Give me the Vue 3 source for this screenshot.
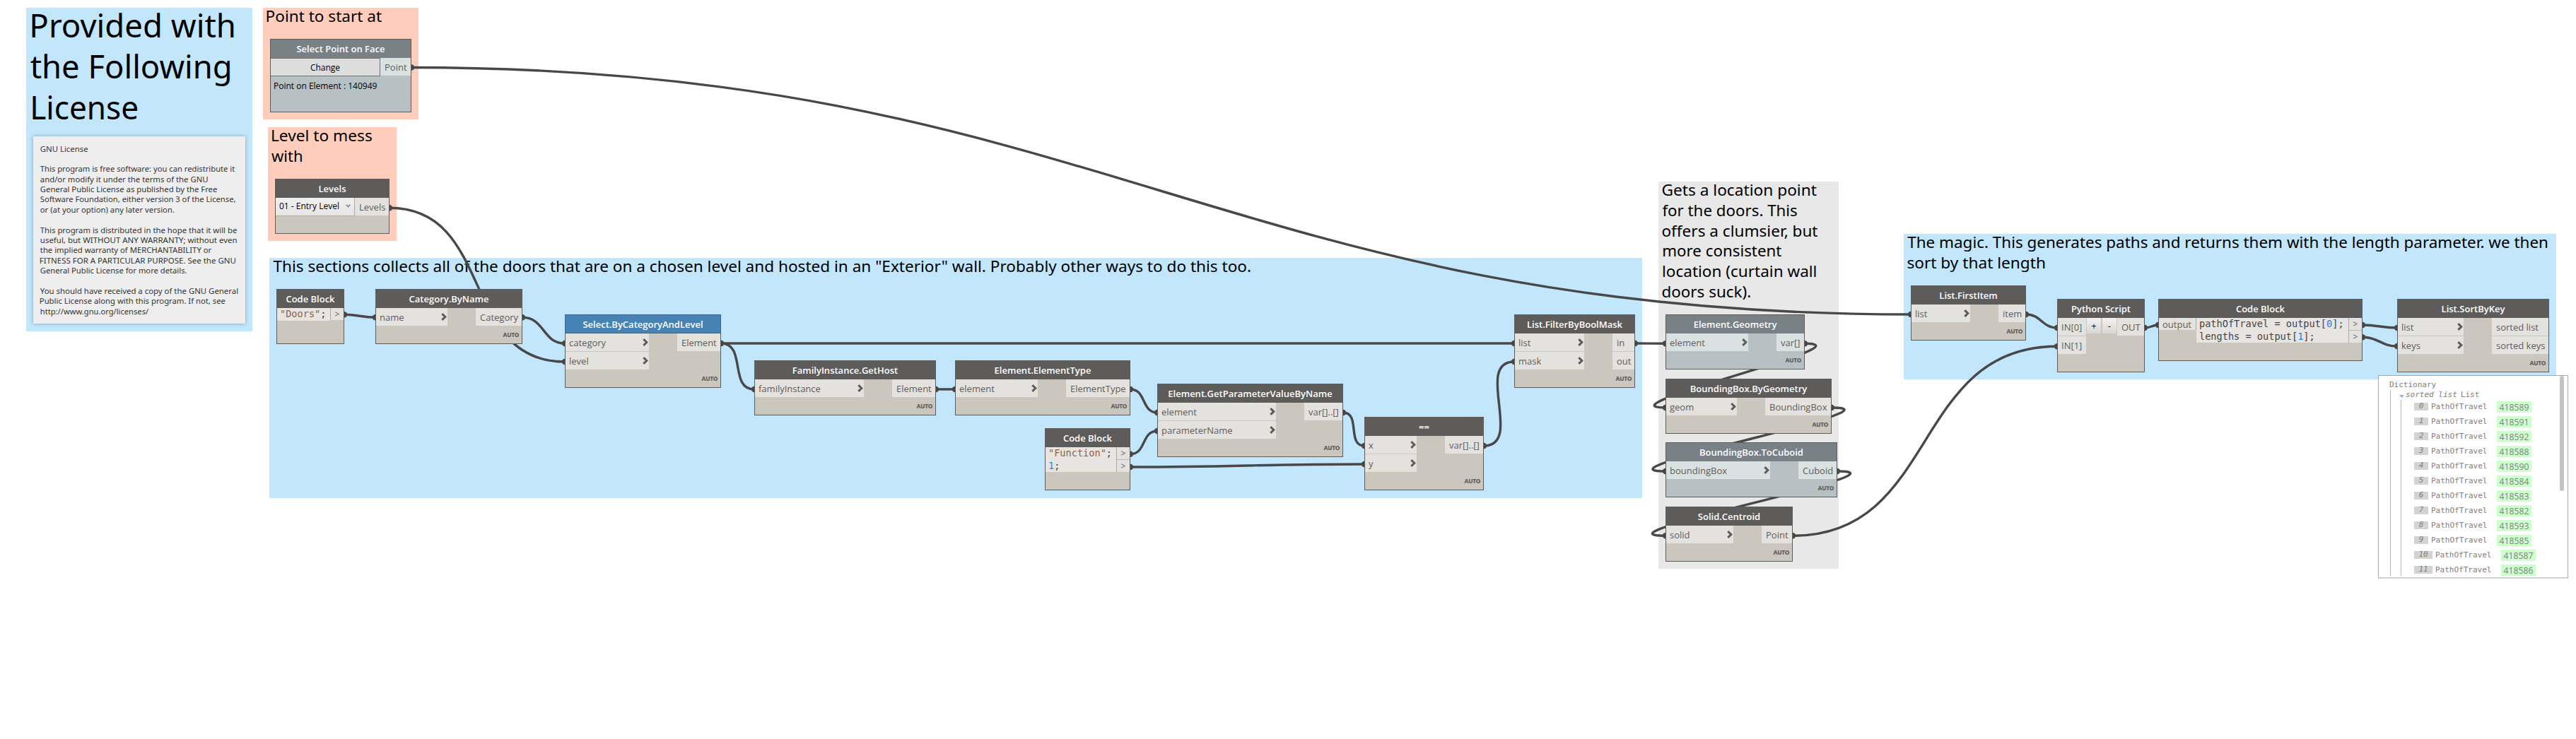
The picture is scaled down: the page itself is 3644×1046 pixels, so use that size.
<script setup>
// Stretches a line of text so that its ink starts at x and is w wide.
const vFit = {
  mounted(el, { value }) {
    const [x, w] = value
    const cs = getComputedStyle(el)
    const ctx = document.createElement('canvas').getContext('2d')
    ctx.font = `${cs.fontStyle} ${cs.fontWeight} ${cs.fontSize} ${cs.fontFamily}`
    const m = ctx.measureText(el.textContent.trim())
    const s = w / (m.actualBoundingBoxLeft + m.actualBoundingBoxRight)
    el.style.transform = `translateX(${x + m.actualBoundingBoxLeft * s}px) scaleX(${s})`
  },
}

const groups = [
  { x: 37, y: 11, w: 320, h: 458, color: '#c2e6fc', big: true, lines: [['Provided with', 8.3, 285.3], ['the Following', 5.7, 282.7], ['License', 9, 148.3]] },
  { x: 372, y: 11, w: 220, h: 158, color: '#ffcdbb', lines: [['Point to start at', 5.6, 162.4]] },
  { x: 379, y: 180, w: 182, h: 161, color: '#ffcdbb', lines: [['Level to mess', 6, 141], ['with', 5, 43.6]] },
  { x: 381, y: 365, w: 1942, h: 340, color: '#c2e6fc', lines: [['This sections collects all of the doors that are on a chosen level and hosted in an "Exterior" wall. Probably other ways to do this too.', 5.4, 1382.6]] },
  { x: 2346, y: 257, w: 255, h: 548, color: '#e8e8e8', lines: [['Gets a location point', 5.4, 218.4], ['for the doors. This', 5.4, 190.6], ['offers a clumsier, but', 5.4, 220], ['more consistent', 6.2, 168], ['location (curtain wall', 6, 216.6], ['doors suck).', 5.4, 124.8]] },
  { x: 2693, y: 331, w: 923, h: 206, color: '#c2e6fc', lines: [['The magic. This generates paths and returns them with the length parameter. we then', 5.2, 905.8], ['sort by that length', 5.4, 194.6]] },
]

const license = [
  ['GNU License', 67.3], ['', 0],
  ['This program is free software: you can redistribute it', 275.3],
  ['and/or modify it under the terms of the GNU', 237.3],
  ['General Public License as published by the Free', 250],
  ['Software Foundation, either version 3 of the License,', 276.6],
  ['or (at your option) any later version.', 190], ['', 0],
  ['This program is distributed in the hope that it will be', 278],
  ['useful, but WITHOUT ANY WARRANTY; without even', 278.6],
  ['the implied warranty of MERCHANTABILITY or', 242.6],
  ['FITNESS FOR A PARTICULAR PURPOSE. See the GNU', 276.6],
  ['General Public License for more details.', 207.6], ['', 0],
  ['You should have received a copy of the GNU General', 279.3],
  ['Public License along with this program. If not, see', 261.6],
  ['http://www.gnu.org/licenses/', 154],
]

// iw / ow: widths of the input and output port columns
const nodes = [
  { t: 'Select Point on Face', x: 382, y: 55, w: 200, h: 104, kind: 'select', tone: 'geo', out: ['Point'], ow: 43 },
  { t: 'Levels', x: 389, y: 253, w: 162, h: 78, kind: 'drop', out: ['Levels'], ow: 48 },
  { t: 'Code Block', x: 391, y: 409, w: 96, h: 78, kind: 'code', code: [[['s', '"Doors"'], ['', ';']]], outs: 1 },
  { t: 'Category.ByName', x: 531, y: 409, w: 208, h: 78, in: ['name'], iw: 101, out: ['Category'], ow: 65 },
  { t: 'Select.ByCategoryAndLevel', x: 799, y: 445, w: 221, h: 104, tone: 'picked', in: ['category', 'level'], iw: 118, out: ['Element'], ow: 61 },
  { t: 'FamilyInstance.GetHost', x: 1067, y: 510, w: 257, h: 78, in: ['familyInstance'], iw: 154, out: ['Element'], ow: 61 },
  { t: 'Element.ElementType', x: 1351, y: 510, w: 248, h: 78, in: ['element'], iw: 116, out: ['ElementType'], ow: 90 },
  { t: 'Code Block', x: 1478, y: 606, w: 121, h: 88, kind: 'code', code: [[['s', '"Function"'], ['', ';']], [['n', '1'], ['', ';']]], outs: 2 },
  { t: 'Element.GetParameterValueByName', x: 1637, y: 543, w: 263, h: 104, in: ['element', 'parameterName'], iw: 167, out: ['var[]..[]'], ow: 54 },
  { t: '==', x: 1930, y: 590, w: 169, h: 104, in: ['x', 'y'], iw: 73, out: ['var[]..[]'], ow: 54 },
  { t: 'List.FilterByBoolMask', x: 2142, y: 445, w: 171, h: 104, in: ['list', 'mask'], iw: 98, out: ['in', 'out'], ow: 31 },
  { t: 'Element.Geometry', x: 2356, y: 445, w: 197, h: 78, tone: 'geo', in: ['element'], iw: 116, out: ['var[]'], ow: 39 },
  { t: 'BoundingBox.ByGeometry', x: 2356, y: 536, w: 235, h: 78, in: ['geom'], iw: 100, out: ['BoundingBox'], ow: 93 },
  { t: 'BoundingBox.ToCuboid', x: 2356, y: 626, w: 243, h: 78, tone: 'geo', in: ['boundingBox'], iw: 147, out: ['Cuboid'], ow: 54 },
  { t: 'Solid.Centroid', x: 2356, y: 717, w: 180, h: 78, in: ['solid'], iw: 95, out: ['Point'], ow: 43 },
  { t: 'List.FirstItem', x: 2703, y: 404, w: 163, h: 78, in: ['list'], iw: 83, out: ['item'], ow: 38 },
  { t: 'Python Script', x: 2910, y: 423, w: 124, h: 104, kind: 'python', in: ['IN[0]', 'IN[1]'], iw: 40, out: ['OUT'], ow: 38 },
  { t: 'Code Block', x: 3053, y: 423, w: 289, h: 88, kind: 'code', input: 'output', code: [[['', 'pathOfTravel = output['], ['n', '0'], ['', '];']], [['', 'lengths = output['], ['n', '1'], ['', '];']]], outs: 2 },
  { t: 'List.SortByKey', x: 3391, y: 423, w: 215, h: 104, in: ['list', 'keys'], iw: 93, out: ['sorted list', 'sorted keys'], ow: 80 },
]

const wires = [
  [582, 95.5, 2703, 445],
  [551, 294.3, 799, 512],
  [487, 445.3, 531, 449.3],
  [739, 449.3, 799, 486],
  [1020, 486, 2142, 486],
  [1020, 486, 1067, 551],
  [1324, 551, 1351, 551],
  [1599, 551, 1637, 584],
  [1599, 642.8, 1637, 610],
  [1599, 661, 1930, 657],
  [1900, 584, 1930, 631],
  [2099, 631, 2142, 512],
  [2313, 486, 2356, 486.3],
  [2553, 486.3, 2356, 577],
  [2591, 577, 2356, 667],
  [2599, 667, 2356, 758.3],
  [2536, 758.3, 2910, 490.3],
  [2866, 445, 2910, 464],
  [3034, 464, 3053, 460],
  [3342, 460, 3391, 464],
  [3342, 477.3, 3391, 490],
]
const curve = ([x1, y1, x2, y2]) => {
  const o = 0.45 * Math.hypot(x2 - x1, y2 - y1)
  return `M${x1} ${y1}C${x1 + o} ${y1} ${x2 - o} ${y2} ${x2} ${y2}`
}

const results = ['418589', '418591', '418592', '418588', '418590', '418584', '418583', '418582', '418593', '418585', '418587', '418586']
const box = (o) => ({ left: o.x + 'px', top: o.y + 'px', width: o.w + 'px', height: o.h + 'px', background: o.color })
</script>

<template>
  <main class="canvas">
    <section v-for="(g, i) in groups" :key="'g' + i" class="group" :class="{ big: g.big }" :style="box(g)">
      <div class="caption">
        <div v-for="l in g.lines" :key="l[0]" class="line"><span v-fit="[l[1], l[2]]">{{ l[0] }}</span></div>
      </div>
    </section>

    <section class="note">
      <div v-for="(l, i) in license" :key="i" class="note-line"><span v-if="l[0]" v-fit="[9.8, l[1]]">{{ l[0] }}</span></div>
    </section>

    <svg class="wires" width="3644" height="1046" viewBox="0 0 3644 1046">
      <g v-for="(w, i) in wires" :key="i">
        <path :d="curve(w)" />
        <circle :cx="w[0]" :cy="w[1]" r="4.2" />
        <circle :cx="w[2]" :cy="w[3]" r="4.2" />
      </g>
    </svg>

    <article v-for="(n, i) in nodes" :key="'n' + i" class="node" :class="[n.tone, n.kind]" :style="box(n)">
      <header>{{ n.t }}</header>
      <div class="body">
        <template v-if="n.kind === 'code'">
          <div v-if="n.input" class="code-in">{{ n.input }}</div>
          <div class="code-text">
            <div v-for="(row, r) in n.code" :key="r"><span v-for="(p, k) in row" :key="k" :class="p[0]">{{ p[1] }}</span></div>
          </div>
          <div class="code-outs"><div v-for="k in n.outs" :key="k">&gt;</div></div>
        </template>
        <template v-else>
          <button v-if="n.kind === 'select'" class="change">Change</button>
          <div v-if="n.kind === 'drop'" class="combo">
            01 - Entry Level
            <svg width="7" height="5" viewBox="0 0 7 5"><path d="M.7 .7L3.5 3.7L6.3 .7" /></svg>
          </div>
          <div v-if="n.in" class="ports" :style="{ width: n.iw + 'px' }">
            <div v-for="p in n.in" :key="p" class="port">
              <span>{{ p }}</span>
              <svg v-if="n.kind !== 'python'" width="8" height="11" viewBox="0 0 8 11"><path d="M1.3 1.2L5.8 5.5L1.3 9.8" /></svg>
            </div>
          </div>
          <div v-if="n.kind === 'python'" class="steps"><button>+</button><button>-</button></div>
          <div class="ports out" :style="{ width: n.ow + 'px' }">
            <div v-for="p in n.out" :key="p" class="port"><span>{{ p }}</span></div>
          </div>
        </template>
      </div>
      <p v-if="n.kind === 'select'" class="picked-point">Point on Element : 140949</p>
      <footer v-if="!n.kind">AUTO</footer>
    </article>

    <aside class="preview">
      <div class="root">Dictionary</div>
      <div class="tree">
        <div class="branch"><i class="tri"></i><em>sorted list</em><span>List</span></div>
        <div class="items">
          <div v-for="(r, i) in results" :key="r" class="item">
            <em :class="{ wide: i > 9 }">{{ i }}</em><span>PathOfTravel</span><b>{{ r }}</b>
          </div>
        </div>
      </div>
      <div class="thumb"></div>
    </aside>
  </main>
</template>

<style>
body { margin: 0; background: #fff; }
</style>

<style scoped>
* { box-sizing: border-box; }
.canvas { position: relative; width: 3644px; height: 1046px; overflow: hidden; background: #fff; font-family: "Open Sans", sans-serif; }
.group { position: absolute; color: #000; font: 22.5px/28.75px "Noto Sans", sans-serif; white-space: nowrap; }
.caption { margin-top: -2px; }
.big { font-size: 46px; line-height: 57.8px; }
.big .caption { margin-top: -4px; }
.line span, .note-line span { display: inline-block; transform-origin: 0 50%; }
.line { height: 28.75px; }
.big .line { height: 57.8px; }
.note { position: absolute; left: 47px; top: 193px; width: 300px; height: 265px; background: #eee; box-shadow: 0 0 5px rgba(0, 0, 0, .3); padding-top: 10.5px; color: #333; font: 11.6px/14.375px "Noto Sans", sans-serif; white-space: nowrap; }
.note-line { height: 14.375px; }
.wires { position: absolute; left: 0; top: 0; }
.wires path { fill: none; stroke: #484848; stroke-width: 3.4; }
.wires circle { fill: #484848; }

.node { position: absolute; display: flex; flex-direction: column; border: 1px solid #5e5c5a; background: #cbc6be; color: #5e5c5a; font-size: 13px; white-space: nowrap; --port: #e4e2df; }
.node header { height: 26px; flex: none; line-height: 26px; text-align: center; background: #5e5c5a; color: #fff; font-weight: 600; }
.node.geo { background: #b7c0c3; --port: #dae1e1; }
.node.geo header { background: #778186; }
.node.picked header { background: #4682b4; border-bottom: 1px solid #5e5c5a; }
.body { display: flex; justify-content: space-between; align-items: flex-start; }
.ports { display: flex; flex-direction: column; gap: 1px; }
.port { display: flex; align-items: center; justify-content: space-between; height: 25px; padding: 1px 1px 0 5px; background: var(--port); }
.out .port { padding-left: 6px; }
.port svg { margin-top: -2px; }
.port svg path { fill: none; stroke: #5e5c5a; stroke-width: 3; }
footer { margin-top: auto; height: 25px; line-height: 24px; padding: 1px 4px 0 0; text-align: right; font-family: "Noto Sans", sans-serif; font-size: 8.4px; font-weight: 800; letter-spacing: -.3px; }

button { font: 13px "Open Sans", sans-serif; color: #000; padding: 0; border-radius: 0; }
.change { width: 155px; height: 26px; border: 1px solid #707070; border-left: 0; background: #ddd; font-size: 12px; padding-top: 1px; }
.picked-point { margin: 0; padding: 5px 0 0 4px; font-size: 12px; line-height: 17px; color: #000; }
.combo { display: flex; align-items: center; justify-content: space-between; width: 112px; height: 26px; padding: 0 5px 2px 5px; border: 1px solid #acacac; border-left: 0; border-top: 0; background: linear-gradient(#f0f0f0, #e5e5e5); color: #000; font-size: 12px; }
.combo svg path { fill: none; stroke: #777; stroke-width: 1.3; }
.steps { display: flex; gap: 2px; }
.steps button { width: 20px; height: 22px; border: 0; background: linear-gradient(#f2f2f2, #d9d6d2); font-size: 12px; }

.code-text { flex: 1; padding: 0 0 0 4px; background: #e7e4e2; color: #444; font: 13.6px/17.5px "DejaVu Sans Mono", monospace; }
.code-text div { height: 17.5px; white-space: pre; }
.code-text .s { color: #8f6443; }
.code-text .n { color: #2585e5; }
.code-outs { display: flex; flex-direction: column; gap: 1px; width: 19px; border-left: 1px solid #aaa; background: #bdbab6; }
.code-outs div { height: 17px; line-height: 17px; text-align: center; background: #e4e2df; font-size: 12px; }
.code-in { width: 53px; height: 17px; line-height: 18px; padding-left: 5px; background: #e4e2df; border-right: 1px solid #aaa; }

.preview { position: absolute; left: 3364px; top: 531px; width: 269px; height: 288px; border: 1px solid #a9a9a9; border-bottom: 2px solid #cfcfcf; background: #fff; color: #808080; font: 11px/14px "DejaVu Sans Mono", monospace; white-space: nowrap; overflow: hidden; }
.root { padding: 6px 0 0 15px; height: 20px; }
.tree { margin-left: 16px; border-left: 1px solid #b4b4b4; height: 263px; }
.branch { display: flex; align-items: center; padding-left: 12px; height: 14px; }
.tri { width: 7px; height: 4px; margin: 4px 2px 0 0; background: #86b5dc; clip-path: polygon(0 0, 100% 0, 50% 100%); }
.branch em { margin-right: 5px; }
.items { margin-left: 14px; border-left: 1px solid #b4b4b4; height: 249px; padding-top: 2px; }
.item { display: flex; align-items: flex-start; height: 21px; padding-left: 18px; }
.item em { width: 20px; height: 11px; margin-top: 2px; line-height: 10px; text-align: center; background: #d3d3d3; }
.item em.wide { width: 26px; }
.item span { width: 79px; margin: 1px 14px 0 4px; }
.item b { width: 49px; height: 16px; text-align: center; background: #ccffcc; font: 400 12.2px/17px "Open Sans", sans-serif; }
.thumb { position: absolute; right: 5px; top: 0; width: 6px; height: 163px; border-radius: 3px; background: #c4c4c4; }
</style>
